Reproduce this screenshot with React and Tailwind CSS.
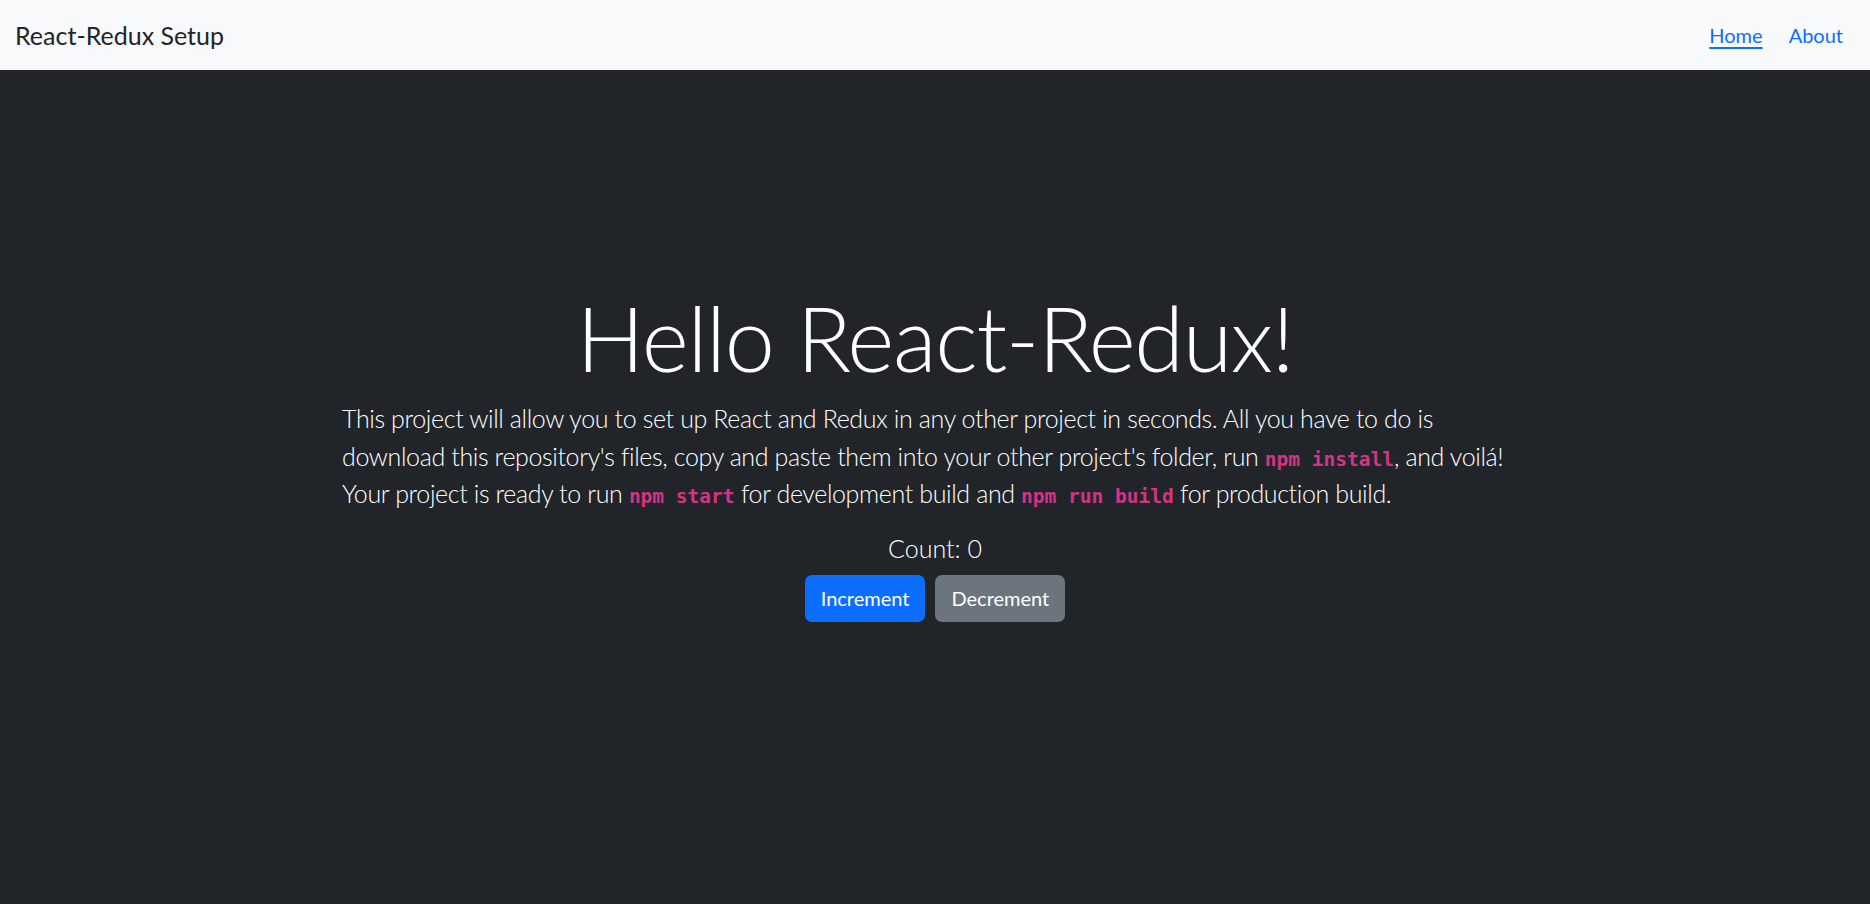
import { useState } from 'react';

const SANS = "font-['Lato','Open_Sans',sans-serif]";

function Code({ children }) {
  return (
    <code className="font-['DejaVu_Sans_Mono','Liberation_Mono',monospace] text-[19.5px] font-bold tracking-normal text-[#d63384]">
      {children}
    </code>
  );
}

export default function App() {
  const [count, setCount] = useState(0);

  return (
    <div className={`min-h-screen flex flex-col bg-[#212529] ${SANS}`}>
      {/* Navbar */}
      <nav className="h-[70px] shrink-0 bg-[#f8f9fa] flex items-center justify-between px-[15px]">
        <a href="#" className="text-[25px] text-[#212529] leading-none">React-Redux Setup</a>
        <div className="flex items-center gap-[26px] pr-[12px] text-[20px] text-[#0d6efd]">
          <a href="#" className="underline underline-offset-[4px]">Home</a>
          <a href="#">About</a>
        </div>
      </nav>

      {/* Main */}
      <main className="flex-1 flex flex-col items-center pt-[213px] text-white">
        <h1 className="text-[90px] font-light leading-[1.2] mb-[9px] tracking-[-0.014em]">Hello React-Redux!</h1>
        <p className="w-[1186px] whitespace-nowrap text-[25px] font-light leading-[1.5] mb-[20px] tracking-[-0.015em]">
          This project will allow you to set up React and Redux in any other project in seconds. All you have to do is
          <br />
          download this repository's files, copy and paste them into your other project's folder, run <Code>npm install</Code>, and voilá!
          <br />
          Your project is ready to run <Code>npm start</Code> for development build and <Code>npm run build</Code> for production build.
        </p>
        <h5 className="text-[25px] font-light leading-[1.2] mb-[12px]">Count: {count}</h5>
        <div className="flex gap-[10px]">
          <button
            onClick={() => setCount(count + 1)}
            className="h-[47px] px-[16px] rounded-[7px] bg-[#0d6efd] text-white text-[20px]"
          >
            Increment
          </button>
          <button
            onClick={() => setCount(count - 1)}
            className="h-[47px] px-[16px] rounded-[7px] bg-[#6c757d] text-white text-[20px]"
          >
            Decrement
          </button>
        </div>
      </main>
    </div>
  );
}
